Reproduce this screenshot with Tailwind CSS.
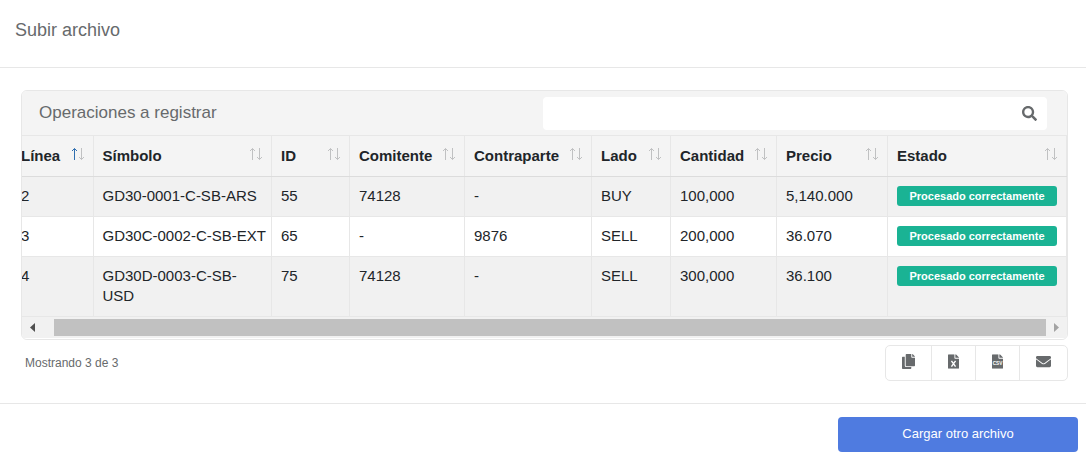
<!DOCTYPE html>
<html lang="es">
  <head>
    <meta charset="UTF-8" />
    <meta name="viewport" content="width=device-width, initial-scale=1.0" />
    <title>Subir archivo</title>
    <script src="https://cdn.jsdelivr.net/npm/@tailwindcss/browser@4"></script>
  </head>
  <body class="bg-white font-['Liberation_Sans',Arial,sans-serif] text-[#676a6c]">
    <!-- Shared icons -->
    <svg class="hidden">
      <symbol id="sort" viewBox="0 0 14 14">
        <path d="M3.500 13V1.500M1 4l2.500-2.500L6 4" fill="none" stroke="var(--up, #c0c1c2)" />
        <path d="M10.500 1v11.500M8 10l2.500 2.500L13 10" fill="none" stroke="#c0c1c2" />
      </symbol>
      <symbol id="file" viewBox="0 0 384 512">
        <path d="M224 136V0H24C10.700 0 0 10.700 0 24v464c0 13.300 10.700 24 24 24h336c13.300 0 24-10.700 24-24V160H248c-13.200 0-24-10.800-24-24zM384 121.900v6.100H256V0h6.100c6.400 0 12.500 2.500 17 7l97.900 98c4.500 4.500 7 10.600 7 16.900z" />
      </symbol>
    </svg>

    <header class="border-b border-[#e7e7e7] px-[15px] pt-4 pb-[23px]">
      <h1 class="text-lg leading-7">Subir archivo</h1>
    </header>

    <main class="border-b border-[#e7e7e7] pt-[22px] pr-[18px] pb-[22px] pl-[21px]">
      <section class="overflow-hidden rounded-md border border-[#e7e7e7]">
        <div class="flex h-[45px] items-center justify-between border-b border-[#e7e7e7] bg-[#f4f4f4] pr-5 pl-[17px]">
          <h2 class="text-[17px] leading-6">Operaciones a registrar</h2>
          <label class="flex h-[33px] w-1/2 items-center rounded bg-white pr-[10px]">
            <input type="text" aria-label="Buscar" class="h-full min-w-0 flex-1 px-3 text-sm outline-none" />
            <svg class="size-[15px] fill-current" viewBox="0 0 512 512"><path d="M505 442.700L405.300 343c-4.500-4.500-10.600-7-17-7H372c27.600-35.300 44-79.700 44-128C416 93.100 322.900 0 208 0S0 93.100 0 208s93.100 208 208 208c48.300 0 92.700-16.400 128-44v16.300c0 6.400 2.500 12.500 7 17l99.700 99.700c9.400 9.400 24.600 9.400 33.900 0l28.300-28.300c9.400-9.400 9.400-24.600.1-34zM208 336c-70.700 0-128-57.200-128-128 0-70.700 57.200-128 128-128 70.700 0 128 57.200 128 128 0 70.700-57.200 128-128 128z" /></svg>
          </label>
        </div>

        <!-- Table is scrolled to its right end -->
        <div class="flex justify-end overflow-hidden">
          <table class="w-[calc(100%+10px)] shrink-0 table-fixed text-left text-[15px] leading-5 text-[#212529] [&_td]:border-r [&_td]:border-b [&_td]:border-[#e7e7e7] [&_td]:pt-[9px] [&_td]:pb-[10px] [&_td]:pr-2 [&_td]:pl-[9px] [&_td]:align-top [&_th]:h-10 [&_th]:border-r [&_th]:border-b [&_th]:border-r-[#e7e7e7] [&_th]:border-b-[#dcdcdc] [&_th]:pr-2 [&_th]:pl-[9px] [&_th>button]:flex [&_th>button]:w-full [&_th>button]:items-center [&_th>button]:justify-between [&_th>button]:font-bold [&_svg]:mb-1 [&_svg]:size-[14px] [&_svg]:shrink-0">
            <colgroup>
              <col class="w-[81px]" />
              <col />
              <col class="w-[78px]" />
              <col class="w-[115px]" />
              <col class="w-[127px]" />
              <col class="w-[79px]" />
              <col class="w-[106px]" />
              <col class="w-[111px]" />
              <col class="w-[179px]" />
            </colgroup>
            <thead class="bg-[#f4f4f4]">
              <tr>
                <th><button>Línea <svg class="[--up:#2f6fb0]"><use href="#sort" /></svg></button></th>
                <th><button>Símbolo <svg><use href="#sort" /></svg></button></th>
                <th><button>ID <svg><use href="#sort" /></svg></button></th>
                <th><button>Comitente <svg><use href="#sort" /></svg></button></th>
                <th><button>Contraparte <svg><use href="#sort" /></svg></button></th>
                <th><button>Lado <svg><use href="#sort" /></svg></button></th>
                <th><button>Cantidad <svg><use href="#sort" /></svg></button></th>
                <th><button>Precio <svg><use href="#sort" /></svg></button></th>
                <th><button>Estado <svg><use href="#sort" /></svg></button></th>
              </tr>
            </thead>
            <tbody>
              <tr class="bg-[#f1f1f1]">
                <td>2</td>
                <td>GD30-0001-C-SB-ARS</td>
                <td>55</td>
                <td>74128</td>
                <td>-</td>
                <td>BUY</td>
                <td>100,000</td>
                <td>5,140.000</td>
                <td><span class="block h-5 w-40 rounded-[3px] bg-[#1ab394] text-center text-[11px] leading-5 font-bold text-white">Procesado correctamente</span></td>
              </tr>
              <tr class="bg-white">
                <td>3</td>
                <td class="whitespace-nowrap">GD30C-0002-C-SB-EXT</td>
                <td>65</td>
                <td>-</td>
                <td>9876</td>
                <td>SELL</td>
                <td>200,000</td>
                <td>36.070</td>
                <td><span class="block h-5 w-40 rounded-[3px] bg-[#1ab394] text-center text-[11px] leading-5 font-bold text-white">Procesado correctamente</span></td>
              </tr>
              <tr class="bg-[#f1f1f1]">
                <td>4</td>
                <td>GD30D-0003-C-SB-USD</td>
                <td>75</td>
                <td>74128</td>
                <td>-</td>
                <td>SELL</td>
                <td>300,000</td>
                <td>36.100</td>
                <td><span class="block h-5 w-40 rounded-[3px] bg-[#1ab394] text-center text-[11px] leading-5 font-bold text-white">Procesado correctamente</span></td>
              </tr>
            </tbody>
          </table>
        </div>

        <!-- Horizontal scrollbar -->
        <div class="flex items-center border-b border-white bg-[#f1f1f1] py-[2px]">
          <svg class="ml-2 h-[9px] w-[5px] fill-[#505050]" viewBox="0 0 5 9"><path d="M5 0v9L0 4.500z" /></svg>
          <div class="mr-2 ml-[19px] h-[17px] flex-1 bg-[#c1c1c1]"></div>
          <svg class="mr-2 h-[9px] w-[5px] fill-[#a3a3a3]" viewBox="0 0 5 9"><path d="M0 0v9l5-4.500z" /></svg>
        </div>
      </section>

      <div class="mt-[5px] flex items-center justify-between pl-1">
        <p class="text-xs">Mostrando 3 de 3</p>
        <div class="flex h-9 divide-x divide-[#e7e7e7] rounded-[5px] border border-[#e7e7e7] [&>button]:flex [&>button]:items-center [&>button]:justify-center [&>button]:px-4 [&>button]:pb-[2px] [&_svg]:h-[15px] [&_svg]:fill-current">
          <button aria-label="Copiar">
            <svg class="w-[13px]" viewBox="0 0 448 512"><path d="M320 448v40c0 13.255-10.745 24-24 24H24c-13.255 0-24-10.745-24-24V120c0-13.255 10.745-24 24-24h72v296c0 30.879 25.121 56 56 56h168zm0-344V0H152c-13.255 0-24 10.745-24 24v368c0 13.255 10.745 24 24 24h272c13.255 0 24-10.745 24-24V128H344c-13.200 0-24-10.800-24-24zm120.971-31.029L375.029 7.029A24 24 0 0 0 358.059 0H352v96h96v-6.059a24 24 0 0 0-7.029-16.970z" /></svg>
          </button>
          <button aria-label="Exportar a Excel">
            <svg class="w-[11px]" viewBox="0 0 384 512"><use href="#file" /><path d="M120 235l144 200M264 235L120 435" fill="none" stroke="#fff" stroke-width="50" /></svg>
          </button>
          <button aria-label="Exportar a CSV">
            <svg class="w-[11px]" viewBox="0 0 384 512"><use href="#file" /><text x="192" y="385" text-anchor="middle" font-size="165" font-weight="bold" fill="#fff">CSV</text></svg>
          </button>
          <button aria-label="Enviar por correo">
            <svg class="w-[15px]" viewBox="0 0 512 512"><path d="M502.300 190.800c3.900-3.100 9.700-.2 9.700 4.700V400c0 26.500-21.500 48-48 48H48c-26.500 0-48-21.500-48-48V195.600c0-5 5.700-7.800 9.700-4.700 22.400 17.400 52.100 39.500 154.100 113.600 21.100 15.400 56.700 47.800 92.200 47.600 35.700.3 72-32.800 92.300-47.600 102-74.100 131.600-96.300 154-113.700zM256 320c23.200.4 56.600-29.200 73.400-41.400 132.700-96.300 142.800-104.700 173.400-128.700 5.800-4.500 9.200-11.500 9.200-18.900v-19c0-26.500-21.500-48-48-48H48c-26.500 0-48 21.500-48 48v19c0 7.400 3.400 14.300 9.200 18.900 30.600 23.900 40.700 32.400 173.400 128.700 16.800 12.200 50.200 41.800 73.400 41.400z" /></svg>
          </button>
        </div>
      </div>
    </main>

    <footer class="flex justify-end px-2 pt-[13px] pb-2">
      <button class="h-[35px] w-60 rounded bg-[#4f7be0] text-[13px] text-white">Cargar otro archivo</button>
    </footer>
  </body>
</html>
